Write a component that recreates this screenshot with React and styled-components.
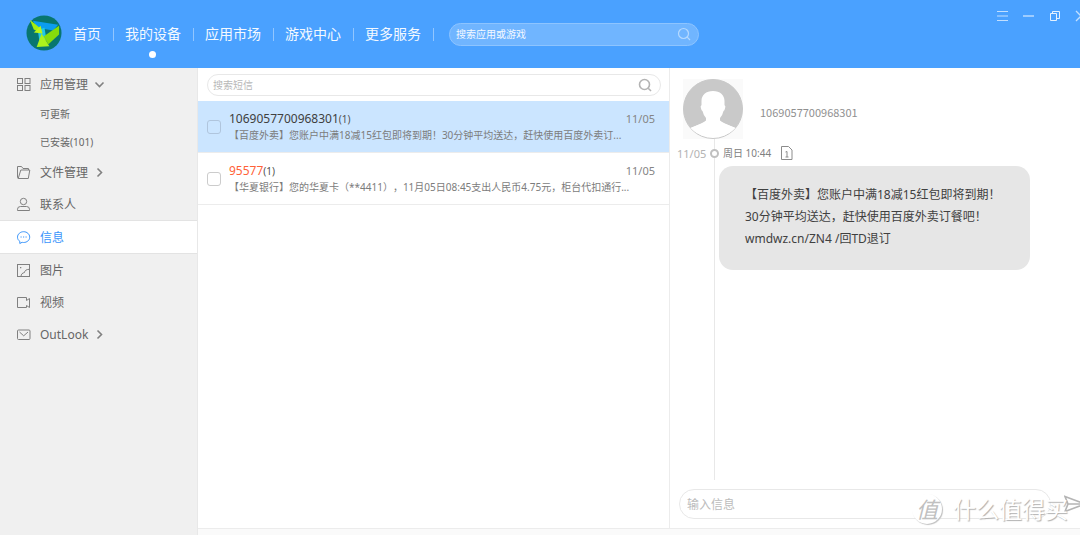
import React, { useState } from 'react';
import styled, { createGlobalStyle } from 'styled-components';

const GlobalStyle = createGlobalStyle`
  * {
    box-sizing: border-box;
  }

  body {
    margin: 0;
    overflow: hidden;
    font-family: 'Noto Sans', 'Noto Sans CJK SC', sans-serif;
    font-size: 12px;
    text-spacing-trim: space-all;
    color: #666666;
    background-color: #ffffff;
  }

  button, input {
    font-family: inherit;
    margin: 0;
  }
`;

const Page = styled.div`
  display: flex;
  flex-direction: column;
  height: 100vh;
  overflow: hidden;
`;

/* header */

const Header = styled.header`
  display: flex;
  align-items: center;
  height: 68px;
  padding-left: 26px;
  background-color: #4aa1ff;
  overflow: hidden;
`;

const Logo = styled.svg`
  flex: none;
  width: 36px;
  height: 36px;
  margin-bottom: 3px;
`;

const Nav = styled.nav`
  display: flex;
`;

const NavItem = styled.div`
  display: flex;
  align-items: center;
  height: 68px;
  padding-left: 11px;

  &::after {
    content: '';
    width: 1px;
    height: 13px;
    margin-left: 12px;
    background-color: #92c6ff;
  }
`;

const NavLink = styled.a`
  position: relative;
  font-size: 14px;
  line-height: 20px;
  color: #f4f9ff;
  text-decoration: none;
  white-space: nowrap;
`;

const ActiveDot = styled.span`
  position: absolute;
  top: 27px;
  left: 50%;
  width: 7px;
  height: 7px;
  margin-left: -4px;
  border-radius: 50%;
  background-color: #ffffff;
`;

const StoreSearch = styled.form`
  display: flex;
  align-items: center;
  width: 250px;
  height: 23px;
  margin-left: 15px;
  padding: 0 7px 0 6px;
  border: 1px solid #8dc4ff;
  border-radius: 12px;
  background-color: #70b5ff;
`;

const StoreInput = styled.input`
  flex: 1;
  min-width: 0;
  padding: 0;
  border: none;
  outline: none;
  background: transparent;
  font-size: 10px;
  color: #ffffff;

  &::placeholder {
    color: #f4f9ff;
    opacity: 1;
  }
`;

const IconButton = styled.button`
  display: flex;
  flex: none;
  padding: 0;
  border: none;
  background: transparent;
  color: ${({ $color }) => $color || '#c2dfff'};
  cursor: pointer;
`;

const WindowButtons = styled.div`
  display: flex;
  align-self: flex-start;
  gap: 14px;
  margin-left: auto;
  margin-right: -7px;
  padding-top: 10px;
`;

/* body */

const Body = styled.div`
  display: flex;
  flex: 1;
  min-height: 0;
`;

const Sidebar = styled.nav`
  flex: none;
  width: 198px;
  border-right: 1px solid #e8e8e8;
  background-color: #f0f0f0;
`;

const MenuItem = styled.a`
  display: flex;
  align-items: center;
  height: ${({ $active }) => ($active ? '34px' : '32px')};
  padding-left: 16px;
  border-style: solid;
  border-color: #e3e3e3;
  border-width: ${({ $active }) => ($active ? '1px 0' : '0')};
  background-color: ${({ $active }) => ($active ? '#ffffff' : 'transparent')};
  color: ${({ $active }) => ($active ? '#3a95fb' : '#808080')};
  text-decoration: none;

  svg {
    flex: none;
  }
`;

const MenuLabel = styled.span`
  margin: 0 6px 0 9px;
  color: ${({ $active }) => ($active ? '#3a95fb' : '#666666')};
`;

const SubItem = styled.a`
  display: block;
  padding-left: 40px;
  font-size: 10px;
  line-height: 28px;
  color: #666666;
  text-decoration: none;
`;

const Content = styled.div`
  display: flex;
  flex-direction: column;
  flex: 1;
  min-width: 0;
`;

const Panels = styled.div`
  display: grid;
  grid-template-columns: minmax(0, 472fr) minmax(0, 410fr);
  flex: 1;
  min-height: 0;
`;

const StatusBar = styled.div`
  height: 7px;
  border-top: 1px solid #ececec;
  background-color: #fafafa;
`;

/* message list */

const ListPanel = styled.section`
  border-right: 1px solid #ececec;
`;

const ListSearch = styled.form`
  display: flex;
  align-items: center;
  height: 22px;
  margin: 6px 8px 5px 9px;
  padding: 0 8px 0 5px;
  border: 1px solid #e8e8e8;
  border-radius: 11px;
`;

const ListInput = styled.input`
  flex: 1;
  min-width: 0;
  padding: 0;
  border: none;
  outline: none;
  font-size: 10px;

  &::placeholder {
    color: #b8b8b8;
    opacity: 1;
  }
`;

const Row = styled.label`
  display: flex;
  align-items: center;
  height: 52px;
  padding: 0 14px 0 9px;
  border-bottom: 1px solid #ececec;
  background-color: ${({ $selected }) => ($selected ? '#cbe5ff' : '#ffffff')};
`;

const Checkbox = styled.input`
  appearance: none;
  flex: none;
  width: 14px;
  height: 14px;
  border: 1px solid ${({ $selected }) => ($selected ? '#b0c5dd' : '#cccccc')};
  border-radius: 3px;

  &:checked {
    background-color: #4aa1ff;
  }
`;

const RowText = styled.div`
  flex: 1;
  min-width: 0;
  margin-left: 8px;
`;

const RowTop = styled.div`
  display: flex;
  align-items: baseline;
  line-height: 18px;
`;

const Sender = styled.span`
  color: ${({ $unread }) => ($unread ? '#ff6238' : '#404040')};
`;

const Count = styled.span`
  font-size: 10px;
  color: #505050;
`;

const RowDate = styled.time`
  margin-left: auto;
  font-size: 11px;
  color: #858585;
`;

const Preview = styled.div`
  font-size: 10px;
  line-height: 15px;
  color: #7c7c7c;
  white-space: nowrap;
  overflow: hidden;
`;

/* conversation */

const ChatPanel = styled.section`
  display: flex;
  flex-direction: column;
  min-height: 0;
  overflow: hidden;
`;

const Contact = styled.div`
  display: flex;
  align-items: center;
  padding: 11px 0 0 13px;
`;

const Avatar = styled.svg`
  flex: none;
  width: 60px;
  height: 60px;
  background-color: #fafafa;
`;

const ContactName = styled.span`
  margin-left: 17px;
  padding-top: 6px;
  font-family: 'Noto Sans CJK SC', sans-serif;
  font-size: 11px;
  line-height: 16px;
  color: #909090;
`;

const Thread = styled.div`
  display: grid;
  grid-template-columns: 44px minmax(0, 1fr);
  flex: 1;
  min-height: 0;
`;

const ThreadDate = styled.time`
  padding-left: 7px;
  font-size: 11px;
  line-height: 29px;
  color: #b3b3b3;
`;

const Timeline = styled.div`
  border-left: 1px solid #e8e8e8;
`;

const Meta = styled.div`
  display: flex;
  align-items: center;
  height: 27px;
  font-size: 10px;
  color: #808080;

  svg {
    margin-left: 10px;
  }
`;

const Dot = styled.span`
  width: 9px;
  height: 9px;
  margin: 2px 4px 0 -5px;
  border: 2px solid #c0c0c0;
  border-radius: 50%;
  background-color: #ffffff;
`;

const Bubble = styled.p`
  max-width: 311px;
  margin: 0 0 0 4px;
  padding: 18px 20px 20px 26px;
  border-radius: 14px;
  background-color: #e6e6e6;
  line-height: 22px;
  color: #404040;
`;

const Composer = styled.form`
  display: flex;
  align-items: center;
  gap: 13px;
  padding: 9px 0 9px 9px;
`;

const ComposerInput = styled.input`
  flex: 1;
  min-width: 0;
  height: 30px;
  padding: 0 7px;
  border: 1px solid #e8e8e8;
  border-radius: 15px;
  outline: none;
  font-size: 12px;

  &::placeholder {
    color: #bcbcbc;
    opacity: 1;
  }
`;

const SendButton = styled(IconButton)`
  width: 16px;
  overflow: hidden;

  svg {
    flex: none;
  }
`;

const Watermark = styled.div`
  position: absolute;
  right: 12px;
  bottom: 10px;
  display: flex;
  align-items: center;
  gap: 11px;
  font-size: 23px;
  line-height: 32px;
  color: #ffffff;
  text-shadow: 1px 1px 1px #b0b0b0;
  pointer-events: none;
`;

const WatermarkBadge = styled.span`
  display: flex;
  align-items: center;
  justify-content: center;
  width: 30px;
  height: 30px;
  border-radius: 50%;
  background-color: #ffffff;
  box-shadow: 1px 1px 1px #c0c0c0;
  font-size: 22px;
  font-style: italic;
  color: #c0c0c0;
  text-shadow: none;
`;

const Icon = ({ size = 15, width = 1, children }) => (
  <svg
    width={size}
    height={size}
    viewBox={`0 0 ${size} ${size}`}
    fill="none"
    stroke="currentColor"
    strokeWidth={width}
    aria-hidden="true"
  >
    {children}
  </svg>
);

const SearchIcon = ({ width }) => (
  <Icon size={14} width={width}>
    <circle cx="6.5" cy="6.5" r="5" />
    <path d="M10.2 10.2 13 13" />
  </Icon>
);

const icons = {
  apps: (
    <>
      <rect x="1.5" y="1.5" width="5" height="5" />
      <rect x="9" y="1.5" width="5" height="5" />
      <rect x="1.5" y="8.5" width="5" height="5" />
      <rect x="9" y="8.5" width="5" height="5" />
    </>
  ),
  files: (
    <>
      <path d="M2.2 13.5 1.5 12.5V1.5h4l1.5 2h5.5v1.5" />
      <path d="M4.8 5h9l-1.5 8.5H2.2z" />
    </>
  ),
  contacts: (
    <>
      <circle cx="7.5" cy="4.5" r="3.2" />
      <path d="M1.5 13.5v-1.2q0-2.800 3-2.800h6q3 0 3 2.800v1.200z" />
    </>
  ),
  messages: (
    <>
      <path d="M3.8 13.5v-2.2C2.3 10.3 1.5 8.9 1.5 7.2c0-3.1 2.8-5.500 6.100-5.500s6.100 2.400 6.100 5.500-2.800 5.300-6.100 5.300c-.6 0-1 0-1.500-.2z" />
      <path d="M4.5 7h1.200M7 7h1.200M9.500 7h1.200" />
    </>
  ),
  pictures: (
    <>
      <rect x="1.5" y="1.5" width="12" height="12" />
      <path d="M5 13.500c0-2.500 1.500-3.500 3.500-4 .2-2 2-3.200 5-3.200" />
      <path d="M4 4.700h1.300" strokeWidth="1.3" />
    </>
  ),
  videos: <path d="M1.5 2.5h9v3l3-2v9l-3-2v2h-9z" />,
  mail: (
    <>
      <rect x="1.5" y="3" width="12.5" height="9.5" rx="1" />
      <path d="m3.500 5 4.200 3.800L12 5" />
    </>
  ),
};

const Chevron = ({ down }) => (
  <Icon size={11} width={1.6}>
    <path d={down ? 'M1.5 3.5 5.5 7.5 9.5 3.5' : 'M3.5 1.5 7.5 5.5 3.5 9.5'} />
  </Icon>
);

const navItems = ['首页', '我的设备', '应用市场', '游戏中心', '更多服务'];

const menuItems = [
  { icon: 'apps', label: '应用管理', open: true, children: ['可更新', '已安装(101)'] },
  { icon: 'files', label: '文件管理', expandable: true },
  { icon: 'contacts', label: '联系人' },
  { icon: 'messages', label: '信息', active: true },
  { icon: 'pictures', label: '图片' },
  { icon: 'videos', label: '视频' },
  { icon: 'mail', label: 'OutLook', expandable: true },
];

const messages = [
  {
    sender: '1069057700968301',
    date: '11/05',
    preview: '【百度外卖】您账户中满18减15红包即将到期！30分钟平均送达，赶快使用百度外卖订...',
    selected: true,
  },
  {
    sender: '95577',
    date: '11/05',
    preview: '【华夏银行】您的华夏卡（**4411），11月05日08:45支出人民币4.75元，柜台代扣通行...',
    unread: true,
  },
];

function TopBar() {
  return (
    <Header>
      <Logo viewBox="0 0 37 37" aria-hidden="true">
        <circle cx="18.5" cy="18.5" r="18" fill="#08766f" />
        <path d="M7 6 33 10 28 16 11 13z" fill="#0b9df0" />
        <path d="M12 15 19 13 21 25 14 28z" fill="#22c8e8" />
        <path d="M4 5 14 13 17 19 8 15z" fill="#a5ee10" />
        <path d="M15 11 17 19 8 18z" fill="#b8f51a" />
        <path d="M34 11V20L23 30 18 22z" fill="#86dc0c" />
        <path d="M16 19 24 32 11 33z" fill="#acf31c" />
      </Logo>
      <Nav>
        {navItems.map((item) => (
          <NavItem key={item}>
            <NavLink href="#">
              {item}
              {item === '我的设备' && <ActiveDot />}
            </NavLink>
          </NavItem>
        ))}
      </Nav>
      <StoreSearch>
        <StoreInput type="text" placeholder="搜索应用或游戏" aria-label="搜索应用或游戏" />
        <IconButton type="button" aria-label="搜索" $color="#b5d9ff">
          <SearchIcon width={1.2} />
        </IconButton>
      </StoreSearch>
      <WindowButtons>
        <IconButton type="button" aria-label="菜单">
          <Icon size={12}>
            <path d="M0 1.5h11M0 6h11M0 10.5h11" />
          </Icon>
        </IconButton>
        <IconButton type="button" aria-label="最小化">
          <Icon size={12}>
            <path d="M0 6h11" strokeWidth="1.4" />
          </Icon>
        </IconButton>
        <IconButton type="button" aria-label="还原" $color="#e4f1ff">
          <Icon size={12}>
            <path d="M1.5 3.500h6v7h-6z" />
            <path d="M3.5 3V1.500h7v7H8" />
          </Icon>
        </IconButton>
        <IconButton type="button" aria-label="关闭">
          <Icon size={12} width={1.3}>
            <path d="m1 1 10 10M11 1 1 11" />
          </Icon>
        </IconButton>
      </WindowButtons>
    </Header>
  );
}

function SideMenu() {
  return (
    <Sidebar>
      {menuItems.map((item) => (
        <React.Fragment key={item.label}>
          <MenuItem href="#" $active={item.active}>
            <Icon>{icons[item.icon]}</Icon>
            <MenuLabel $active={item.active}>{item.label}</MenuLabel>
            {(item.open || item.expandable) && <Chevron down={item.open} />}
          </MenuItem>
          {item.children?.map((child) => (
            <SubItem href="#" key={child}>
              {child}
            </SubItem>
          ))}
        </React.Fragment>
      ))}
    </Sidebar>
  );
}

function MessageList() {
  const [checked, setChecked] = useState({});

  const toggle = (sender) => {
    setChecked({ ...checked, [sender]: !checked[sender] });
  };

  return (
    <ListPanel>
      <ListSearch>
        <ListInput type="text" placeholder="搜索短信" aria-label="搜索短信" />
        <IconButton type="button" aria-label="搜索" $color="#b3b3b3">
          <SearchIcon width={1.6} />
        </IconButton>
      </ListSearch>
      {messages.map((message) => (
        <Row key={message.sender} $selected={message.selected}>
          <Checkbox
            type="checkbox"
            checked={!!checked[message.sender]}
            onChange={() => toggle(message.sender)}
            $selected={message.selected}
          />
          <RowText>
            <RowTop>
              <Sender $unread={message.unread}>{message.sender}</Sender>
              <Count>(1)</Count>
              <RowDate>{message.date}</RowDate>
            </RowTop>
            <Preview>{message.preview}</Preview>
          </RowText>
        </Row>
      ))}
    </ListPanel>
  );
}

function Conversation() {
  return (
    <ChatPanel>
      <Contact>
        <Avatar viewBox="0 0 60 60" aria-hidden="true">
          <circle cx="30" cy="30" r="29.5" fill="#ffffff" stroke="#c9c9c9" />
          <path d="M7.500 49A29.500 29.500 0 1 1 52.500 49L30 40z" fill="#c9c9c9" />
          <path
            d="M30 12c7 0 11.500 4 11.500 10v4q1.500 1 .5 3.500-.5 2-1.500 2.500-1 4.500-3.500 7v2.500q2 2 15.500 7.500Q44 58 30 58T7.500 49Q21 43.500 23 41.500V39q-2.500-2.500-3.500-7-1-.5-1.500-2.500-1-2.500.5-3.500v-4c0-6 4.500-10 11.500-10z"
            fill="#ffffff"
          />
        </Avatar>
        <ContactName>1069057700968301</ContactName>
      </Contact>
      <Thread>
        <ThreadDate>11/05</ThreadDate>
        <Timeline>
          <Meta>
            <Dot />
            <time>周日 10:44</time>
            <svg width="12" height="14" viewBox="0 0 12 14" fill="none" stroke="#8c8c8c" aria-hidden="true">
              <path d="M.5.5h7l3.500 3.500v9.500H.5z" />
              <path d="M4.500 6 6 5.500V11M4.500 11h3" />
            </svg>
          </Meta>
          <Bubble>
            【百度外卖】您账户中满18减15红包即将到期！
            <br />
            30分钟平均送达，赶快使用百度外卖订餐吧！
            <br />
            wmdwz.cn/ZN4 /回TD退订
          </Bubble>
        </Timeline>
      </Thread>
      <Composer>
        <ComposerInput type="text" placeholder="输入信息" aria-label="输入信息" />
        <SendButton type="button" aria-label="发送" $color="#b5b5b5">
          <Icon size={22} width={1.6}>
            <path d="M1 3.500 21 11 1 18.500 4 11zM4 11h17" />
          </Icon>
        </SendButton>
      </Composer>
    </ChatPanel>
  );
}

function App() {
  return (
    <Page>
      <GlobalStyle />
      <TopBar />
      <Body>
        <SideMenu />
        <Content>
          <Panels>
            <MessageList />
            <Conversation />
          </Panels>
          <StatusBar />
        </Content>
      </Body>
      <Watermark>
        <WatermarkBadge>值</WatermarkBadge>
        什么值得买
      </Watermark>
    </Page>
  );
}

export default App;
